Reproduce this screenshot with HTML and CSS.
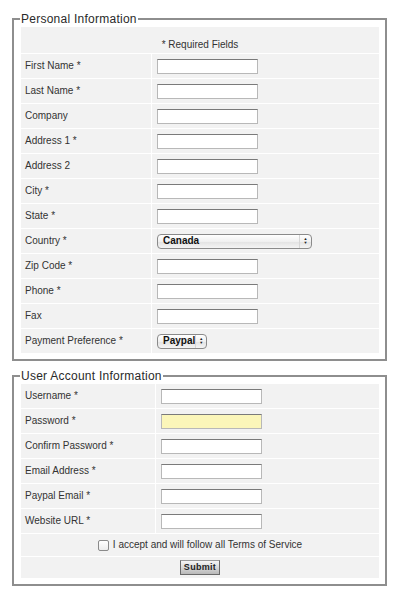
FILE: index.html
```html
<!DOCTYPE html>
<html>
<head>
<meta charset="utf-8">
<link rel="stylesheet" href="styles.css">
</head>
<body>
<div class="page">
  <fieldset class="box box-personal">
    <legend>Personal Information</legend>
    <table class="form-table">
      <tr><td class="head" colspan="2">* Required Fields</td></tr>
      <tr><td class="label">First Name *</td><td class="field"><input class="text" type="text"></td></tr>
      <tr><td class="label">Last Name *</td><td class="field"><input class="text" type="text"></td></tr>
      <tr><td class="label">Company</td><td class="field"><input class="text" type="text"></td></tr>
      <tr><td class="label">Address 1 *</td><td class="field"><input class="text" type="text"></td></tr>
      <tr><td class="label">Address 2</td><td class="field"><input class="text" type="text"></td></tr>
      <tr><td class="label">City *</td><td class="field"><input class="text" type="text"></td></tr>
      <tr><td class="label">State *</td><td class="field"><input class="text" type="text"></td></tr>
      <tr><td class="label">Country *</td><td class="field"><span class="select select-wide"><span class="select-text">Canada</span><span class="select-arrows"><span>&#9650;</span><span>&#9660;</span></span></span></td></tr>
      <tr><td class="label">Zip Code *</td><td class="field"><input class="text" type="text"></td></tr>
      <tr><td class="label">Phone *</td><td class="field"><input class="text" type="text"></td></tr>
      <tr><td class="label">Fax</td><td class="field"><input class="text" type="text"></td></tr>
      <tr><td class="label">Payment Preference *</td><td class="field"><span class="select select-small"><span class="select-text">Paypal</span><span class="select-arrows"><span>&#9650;</span><span>&#9660;</span></span></span></td></tr>
    </table>
  </fieldset>

  <fieldset class="box box-account">
    <legend>User Account Information</legend>
    <table class="form-table">
      <tr><td class="label label-wide">Username *</td><td class="field"><input class="text" type="text"></td></tr>
      <tr><td class="label label-wide">Password *</td><td class="field"><input class="text text-focus" type="password"></td></tr>
      <tr><td class="label label-wide">Confirm Password *</td><td class="field"><input class="text" type="password"></td></tr>
      <tr><td class="label label-wide">Email Address *</td><td class="field"><input class="text" type="text"></td></tr>
      <tr><td class="label label-wide">Paypal Email *</td><td class="field"><input class="text" type="text"></td></tr>
      <tr><td class="label label-wide">Website URL *</td><td class="field"><input class="text" type="text"></td></tr>
      <tr><td class="center terms" colspan="2"><label class="terms-label"><input class="check" type="checkbox"> I accept and will follow all Terms of Service</label></td></tr>
      <tr><td class="center submit-cell" colspan="2"><button class="submit" type="button">Submit</button></td></tr>
    </table>
  </fieldset>
</div>
</body>
</html>
```

FILE: styles.css
```css
* { box-sizing: border-box; }
html, body { margin: 0; padding: 0; background: #fff; }
body {
  font-family: "Liberation Sans", Arial, sans-serif;
  color: #333;
  font-size: 10px;
}
.page {
  padding: 12px 13px 0 12px;
}
.box {
  margin: 0 0 8px 0;
  padding: 0 6px 5px 7px;
  border: 2px solid #8e8e8e;
}
.box legend {
  font-size: 12px;
  line-height: 14px;
  color: #2a2a2a;
  padding: 0 1px;
  margin-left: -1px;
  letter-spacing: 0.25px;
}
.form-table {
  border-collapse: separate;
  border-spacing: 1px;
  margin: 0 -1px;
  width: calc(100% + 2px);
}
.form-table td {
  background: #f2f2f2;
  height: 24px;
  vertical-align: middle;
  padding: 0 4px;
  line-height: 12px;
}
.form-table td.head {
  text-align: center;
  height: 26px;
  padding-top: 9px;
}
.form-table td.label { width: 130px; }
.form-table td.label-wide { width: 134px; }
.text {
  display: block;
  width: 101px;
  height: 15px;
  margin: 0 0 0 1px;
  border: 1px solid #b8b8b8;
  border-top-color: #7a7a7a;
  background: #fff;
  padding: 0;
  font-size: 10px;
}
.text-focus { background: #fbf6b9; }
.select {
  position: relative;
  display: flex;
  align-items: center;
  margin-left: 1px;
  height: 15px;
  border: 1px solid #8a8a8a;
  border-radius: 4px;
  background: linear-gradient(#ffffff, #f0f0f0 50%, #e2e2e2 51%, #f4f4f4);
  font-size: 10px;
  font-weight: bold;
  color: #111;
}
.select-wide { width: 155px; }
.select-small { width: 50px; }
.select-text { padding-left: 5px; flex: 1; }
.select-arrows {
  width: 12px;
  height: 100%;
  border-left: 1px solid #d6d6d6;
  display: flex;
  flex-direction: column;
  align-items: center;
  justify-content: center;
  font-size: 4px;
  line-height: 4px;
  color: #222;
}
.form-table td.center { text-align: center; }
.form-table td.terms { height: 22px; }
.terms-label { display: inline-flex; align-items: center; gap: 4px; vertical-align: middle; }
.check {
  appearance: none;
  -webkit-appearance: none;
  width: 11px;
  height: 11px;
  margin: 0;
  border: 1px solid #8a8a8a;
  border-radius: 2px;
  background: linear-gradient(#fff, #ececec);
}
.form-table td.submit-cell { height: 21px; line-height: 0; }
.submit {
  width: 40px;
  height: 15px;
  padding: 0;
  border: 1px solid #6a6a6a;
  border-top-color: #9a9a9a;
  background: linear-gradient(#f6f6f6, #d8d8d8 50%, #b8b8b8);
  font-family: "Liberation Sans", Arial, sans-serif;
  font-size: 9px;
  line-height: 13px;
  font-weight: bold;
  color: #222;
  letter-spacing: 0.3px;
  vertical-align: middle;
}
```
